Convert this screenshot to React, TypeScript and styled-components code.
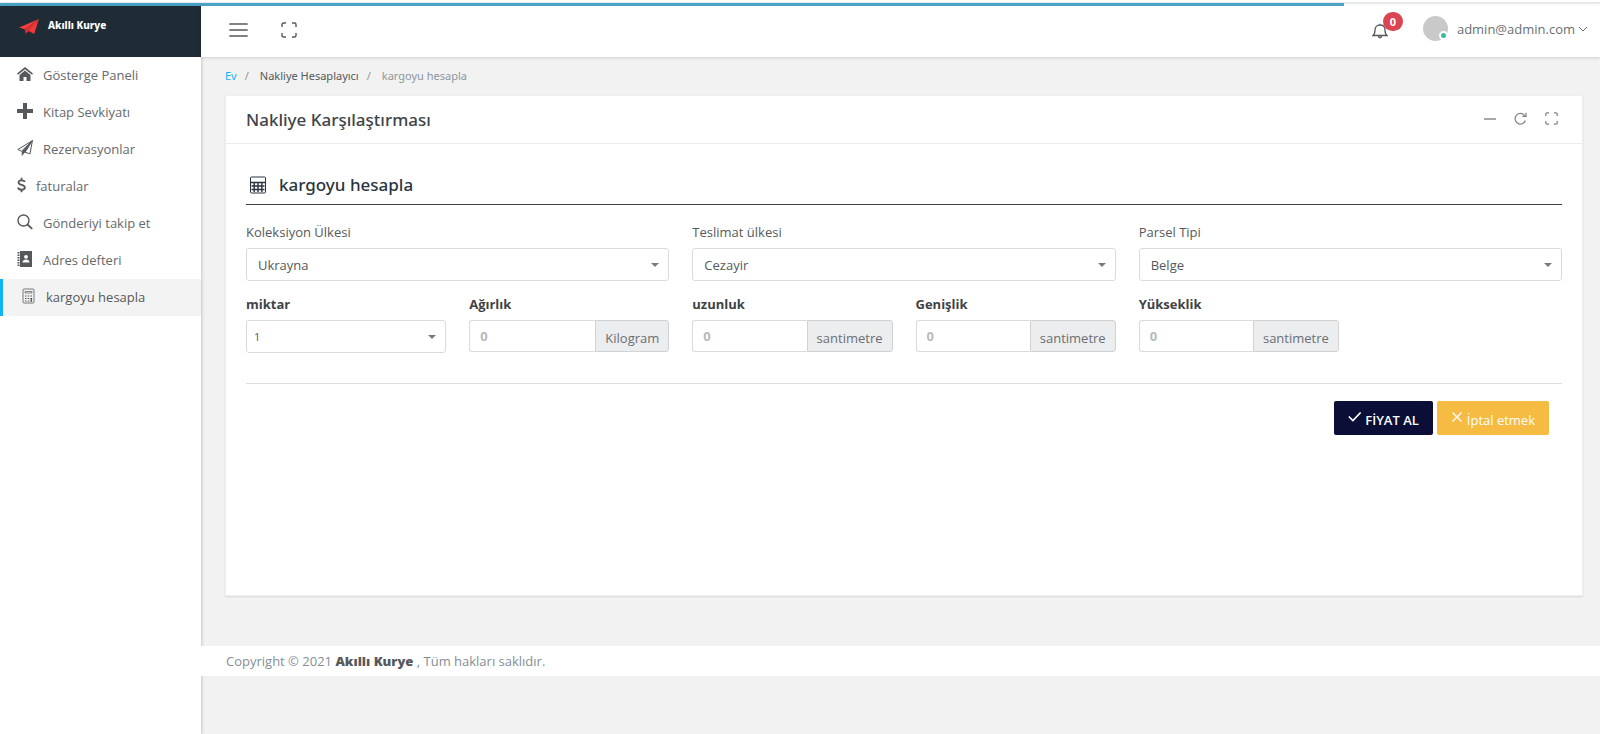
import React from "react";
import styled, { createGlobalStyle, css } from "styled-components";

const Global = createGlobalStyle`
  * { box-sizing: border-box; }
  body {
    margin: 0;
    background: #f2f2f2;
    color: #55595c;
    font: 13px/20px "Open Sans", "Noto Sans", sans-serif;
  }
  button, input, select { font: inherit; color: inherit; }
  a { color: inherit; text-decoration: none; }
`;

const headingFont = css`
  font-family: "Noto Sans", "Open Sans", sans-serif;
`;

const Page = styled.div`
  min-height: 100vh;
  display: flex;
  flex-direction: column;
`;

const Progress = styled.div`
  flex: none;
  height: 6px;
  padding-top: 3px;
  background: linear-gradient(#fff 2px, #e6e9eb 2px, #e6e9eb 4px, #fff 4px);
`;

const ProgressBar = styled.div`
  width: 84%;
  height: 3px;
  background: #4ba6ca;
`;

const Shell = styled.div`
  flex: 1;
  display: flex;
`;

const Sidebar = styled.aside`
  flex: none;
  width: 201px;
  background: #fff;
  box-shadow: 1px 0 3px rgba(0, 0, 0, 0.18);
`;

const Brand = styled.a`
  ${headingFont}
  height: 51px;
  padding: 9px 19px;
  display: flex;
  gap: 9px;
  background: #1f2b35;
  color: #fff;
  font-size: 10px;
  font-weight: 800;
  svg { margin-top: 4px; }
`;

const Nav = styled.nav`
  display: flex;
  flex-direction: column;
`;

const NavItem = styled.a<{ $active?: boolean }>`
  height: 37px;
  padding: 0 17px 1px;
  display: flex;
  align-items: center;
  gap: 10px;
  color: #66696c;
  svg { color: #55595c; margin-bottom: 2px; }
  ${(p) =>
    p.$active &&
    css`
      background: #f3f3f3;
      border-left: 3px solid #10b4f5;
      color: #55595c;
      padding-left: 19px;
      gap: 11px;
    `}
`;

const Main = styled.div`
  flex: 1;
  min-width: 0;
`;

const TopBar = styled.header`
  height: 51px;
  padding: 0 12px 4px 28px;
  display: flex;
  align-items: center;
  justify-content: space-between;
  background: #fff;
  box-shadow: 0 1px 3px rgba(0, 0, 0, 0.15);
`;

const BarGroup = styled.div<{ $gap: number }>`
  display: flex;
  align-items: center;
  gap: ${(p) => p.$gap}px;
`;

const IconButton = styled.button`
  display: flex;
  padding: 0;
  border: 0;
  background: none;
  color: inherit;
  position: relative;
  cursor: pointer;
`;

const Badge = styled.span`
  position: absolute;
  top: -11px;
  left: 11px;
  width: 20px;
  height: 19px;
  border-radius: 10px;
  background: #da4453;
  color: #fff;
  font-size: 11px;
  line-height: 19px;
  font-weight: 700;
  text-align: center;
`;

const Bell = styled(IconButton)`
  margin-top: 2px;
`;

const UserMenu = styled(IconButton)`
  padding-bottom: 2px;
  align-items: center;
  gap: 9px;
  color: #6b6f73;
`;

const UserName = styled.span`
  display: flex;
  align-items: center;
  gap: 3px;
`;

const Avatar = styled.span`
  position: relative;
  width: 25px;
  height: 25px;
  border-radius: 50%;
  background: #c9c9c9;
  &::after {
    content: "";
    position: absolute;
    right: 0;
    bottom: 1px;
    width: 9px;
    height: 9px;
    border: 2px solid #fff;
    border-radius: 50%;
    background: #37bc9b;
    box-sizing: border-box;
  }
`;

const Content = styled.main`
  padding: 9px 17px 50px 24px;
`;

const Crumbs = styled.nav`
  ${headingFont}
  display: flex;
  gap: 8px;
  font-size: 11px;
  margin-bottom: 9px;
  color: #8f969c;
`;

const Separator = styled.span`
  margin-right: 3px;
`;

const CrumbLink = styled.a<{ $accent?: boolean }>`
  color: ${(p) => (p.$accent ? "#10b4f5" : "#55595c")};
`;

const Card = styled.section`
  min-height: 501px;
  background: #fff;
  border: 1px solid #efefef;
  box-shadow: 0 1px 2px rgba(0, 0, 0, 0.1);
`;

const CardHeader = styled.header`
  height: 48px;
  padding: 0 24px 0 20px;
  display: flex;
  align-items: center;
  justify-content: space-between;
  border-bottom: 1px solid #ececec;
`;

const Title = styled.h1`
  ${headingFont}
  margin: 0;
  font-size: 17px;
  font-weight: 500;
  color: #404448;
`;

const Tools = styled(BarGroup)`
  padding-bottom: 2px;
  color: #7d8286;
`;

const Form = styled.form`
  padding: 24px 20px;
`;

const SectionTitle = styled.h2`
  ${headingFont}
  margin: 0 0 17px;
  padding: 4px 4px 7px;
  display: flex;
  align-items: center;
  gap: 13px;
  height: 37px;
  border-bottom: 1px solid #404346;
  color: #2b3540;
  font-size: 17px;
  font-weight: 500;
`;

const Fields = styled.div`
  display: grid;
  grid-template-columns: repeat(6, 1fr);
  gap: 13px 23px;
`;

const Field = styled.div<{ $span?: number }>`
  grid-column: span ${(p) => p.$span ?? 1};
  min-width: 0;
`;

const Label = styled.label<{ $bold?: boolean }>`
  display: block;
  margin-bottom: 6px;
  font-weight: ${(p) => (p.$bold ? 700 : 400)};
  color: ${(p) => (p.$bold ? "#404346" : "#55595c")};
`;

const SelectBox = styled.div`
  display: grid;
  align-items: center;
  &::after {
    content: "";
    grid-area: 1 / 1;
    justify-self: end;
    margin-right: 10px;
    border: 4px solid transparent;
    border-top-color: #7a7a7a;
    border-bottom: 0;
    pointer-events: none;
  }
`;

const Select = styled.select<{ $small?: boolean }>`
  grid-area: 1 / 1;
  width: 100%;
  height: 33px;
  padding: 0 ${(p) => (p.$small ? 7 : 11)}px;
  appearance: none;
  border: 1px solid #d9dbdd;
  border-radius: 3px;
  background: #fff;
  font-size: ${(p) => (p.$small ? 11 : 13)}px;
`;

const InputGroup = styled.div`
  display: flex;
  height: 32px;
`;

const Input = styled.input`
  flex: 1;
  min-width: 0;
  padding: 0 10px;
  border: 1px solid #d9dbdd;
  border-right: 0;
  border-radius: 3px 0 0 3px;
  background: #fff;
  &::placeholder { color: #b8babc; font-weight: 700; opacity: 1; }
`;

const Unit = styled.span`
  padding: 7px 9px 0;
  border: 1px solid #d0d2d4;
  border-radius: 0 3px 3px 0;
  background: #ecedef;
  color: #6b6f73;
`;

const Actions = styled.div`
  margin-top: 30px;
  padding: 17px 13px 0;
  display: flex;
  justify-content: flex-end;
  gap: 4px;
  border-top: 1px solid #dcdddf;
`;

const Button = styled.button<{ $color: string; $strong?: boolean }>`
  height: 34px;
  padding: 3px 14px 0;
  display: flex;
  align-items: center;
  gap: 4px;
  border: 0;
  border-radius: 2px;
  background: ${(p) => p.$color};
  color: #fff;
  font-weight: ${(p) => (p.$strong ? 600 : 400)};
  cursor: pointer;
  svg { margin-bottom: 6px; }
`;

const Footer = styled.footer`
  padding: 5px 25px 5px;
  background: #fff;
  color: #868e96;
  strong { color: #55595c; font-weight: 800; }
`;

type IconProps = { w?: number; h?: number; box?: string; sw?: number; fill?: boolean; children: React.ReactNode };
const Icon = ({ w = 16, h = w, box = "0 0 16 16", sw = 1, fill, children }: IconProps) => (
  <svg width={w} height={h} viewBox={box} fill={fill ? "currentColor" : "none"} stroke={fill ? "none" : "currentColor"} strokeWidth={sw} aria-hidden="true">
    {children}
  </svg>
);

const corners = "M1 5V2.5Q1 1 2.500 1H5M11 1h2.500Q15 1 15 2.500V5M15 11v2.500Q15 15 13.500 15H11M5 15H2.500Q1 15 1 13.500V11";

const Logo = () => (
  <svg width="20" height="16" viewBox="0 0 21 17" aria-hidden="true">
    <path d="M21 0 0 9l6 2z" fill="#f4413f" />
    <path d="M21 0 6 11l1 5 3-3z" fill="#b3262b" />
    <path d="M21 0 9 12l7 4z" fill="#ee3a3a" />
    <path d="M21 0 6 11l1 4 3-2z" fill="#d93034" />
  </svg>
);

const HomeIcon = () => (
  <Icon fill>
    <path d="M8 1 0 7.500l1 1.300 7-5.600 7 5.600 1-1.300z" />
    <path d="M8 4.600 2.500 9v6H6.500v-4h3v4h4V9z" />
  </Icon>
);
const PlusIcon = () => <Icon fill><path d="M6 0h4v6h6v4h-6v6H6v-6H0V6h6z" /></Icon>;
const PlaneIcon = () => (
  <Icon>
    <path d="M15.400.6.800 9.500l3.700 1.700L15.400.6 13 13.800l-5-1.500z" strokeLinejoin="round" />
    <path d="M15.400.6 5 11.400V15.500l2.800-3.300z" fill="currentColor" strokeWidth="0.500" />
  </Icon>
);
const DollarIcon = () => (
  <Icon w={9} h={16} box="0 0 10 16" sw={2}>
    <path d="M8.700 4.800C8.300 3.400 7 2.800 5 2.800 3 2.800 1.700 3.600 1.700 5.200 1.700 8.600 8.700 7 8.700 10.700c0 1.700-1.500 2.500-3.700 2.500-2.200 0-3.500-.8-3.900-2.400M5 0v2.800M5 13.200V16" />
  </Icon>
);
const SearchIcon = () => <Icon sw={1.4}><circle cx="6.500" cy="6.500" r="5.500" /><path d="m10.500 10.500 4.700 4.300" strokeWidth="1.800" /></Icon>;
const BookIcon = () => (
  <Icon>
    <path d="M1.500 1v14" strokeWidth="2" strokeDasharray="1.500 1" />
    <path d="M3 0h12v16H3z" fill="currentColor" stroke="none" />
    <circle cx="9" cy="5.800" r="1.900" fill="#fff" stroke="none" />
    <path d="M5.500 11.500c0-4 7-4 7 0z" fill="#fff" stroke="none" />
  </Icon>
);
const CalcIcon = () => (
  <Icon w={13} h={16} box="0 0 13 16">
    <rect x="1" y="1" width="11" height="14" rx="1" strokeWidth="0.800" />
    <path d="M3 3.500h7v1.500H3z" strokeWidth="0.700" />
    <path d="M3 8h7M3 10.500h7M3 13h7" strokeWidth="1.200" strokeDasharray="1.600 1.100" />
    <path d="M9.400 10v3.500" strokeWidth="1.400" />
  </Icon>
);
const TableCalcIcon = () => (
  <Icon w={16} h={18} box="0 0 16 18">
    <rect x="0.500" y="1" width="15" height="16" rx="1" />
    <path d="M0.500 6.500h15M1.500 10h13M1.500 13.500h13M4.200 6.500V16M8 6.500V16M11.800 6.500V16" strokeWidth="1.400" />
  </Icon>
);

const nav = [
  { label: "Gösterge Paneli", icon: <HomeIcon /> },
  { label: "Kitap Sevkiyatı", icon: <PlusIcon /> },
  { label: "Rezervasyonlar", icon: <PlaneIcon /> },
  { label: "faturalar", icon: <DollarIcon /> },
  { label: "Gönderiyi takip et", icon: <SearchIcon /> },
  { label: "Adres defteri", icon: <BookIcon /> },
  { label: "kargoyu hesapla", icon: <CalcIcon />, active: true },
];

const selects = [
  { id: "from", label: "Koleksiyon Ülkesi", value: "Ukrayna" },
  { id: "to", label: "Teslimat ülkesi", value: "Cezayir" },
  { id: "type", label: "Parsel Tipi", value: "Belge" },
];

const measures = [
  { id: "weight", label: "Ağırlık", unit: "Kilogram" },
  { id: "length", label: "uzunluk", unit: "santimetre" },
  { id: "width", label: "Genişlik", unit: "santimetre" },
  { id: "height", label: "Yükseklik", unit: "santimetre" },
];

export default function App() {
  return (
    <Page>
      <Global />
      <Progress><ProgressBar /></Progress>
      <Shell>
        <Sidebar>
          <Brand href="#"><Logo />Akıllı Kurye</Brand>
          <Nav>
            {nav.map((n) => (
              <NavItem key={n.label} href="#" $active={n.active}>
                {n.icon}{n.label}
              </NavItem>
            ))}
          </Nav>
        </Sidebar>
        <Main>
          <TopBar>
            <BarGroup $gap={33}>
              <IconButton type="button">
                <Icon w={19} h={14} box="0 0 19 14" sw={1.7}><path d="M1 1h17M1 7h17M1 13h17" strokeLinecap="round" /></Icon>
              </IconButton>
              <IconButton type="button"><Icon sw={1.4}><path d={corners} /></Icon></IconButton>
            </BarGroup>
            <BarGroup $gap={35}>
              <Bell type="button">
                <Icon>
                  <path d="M1 12.500C3 11 3 9.500 3 7c0-3 2-5 5-5s5 2 5 5c0 2.500 0 4 2 5.500zM6.500 13c0 2.300 3 2.300 3 0M8 2V.8" strokeWidth="1.300" />
                </Icon>
                <Badge>0</Badge>
              </Bell>
              <UserMenu type="button">
                <Avatar />
                <UserName>
                  admin@admin.com
                  <Icon w={10} h={6} box="0 0 10 6"><path d="m1 1 4 4 4-4" /></Icon>
                </UserName>
              </UserMenu>
            </BarGroup>
          </TopBar>
          <Content>
            <Crumbs>
              <CrumbLink href="#" $accent>Ev</CrumbLink><Separator>/</Separator>
              <CrumbLink href="#">Nakliye Hesaplayıcı</CrumbLink><Separator>/</Separator>
              <span>kargoyu hesapla</span>
            </Crumbs>
            <Card>
              <CardHeader>
                <Title>Nakliye Karşılaştırması</Title>
                <Tools $gap={18}>
                  <IconButton type="button"><Icon w={12} box="0 0 12 12"><path d="M0 6h12" strokeWidth="1.400" /></Icon></IconButton>
                  <IconButton type="button">
                    <Icon w={13} sw={1.5}><path d="M14 10.500A6.500 6.500 0 1 1 13.200 4.500M14.800 1v4.500h-4.500" /></Icon>
                  </IconButton>
                  <IconButton type="button"><Icon w={13} sw={1.5}><path d={corners} /></Icon></IconButton>
                </Tools>
              </CardHeader>
              <Form onSubmit={(e) => e.preventDefault()}>
                <SectionTitle><TableCalcIcon />kargoyu hesapla</SectionTitle>
                <Fields>
                  {selects.map((s) => (
                    <Field key={s.id} $span={2}>
                      <Label htmlFor={s.id}>{s.label}</Label>
                      <SelectBox>
                        <Select id={s.id}><option>{s.value}</option></Select>
                      </SelectBox>
                    </Field>
                  ))}
                  <Field>
                    <Label htmlFor="qty" $bold>miktar</Label>
                    <SelectBox><Select id="qty" $small><option>1</option></Select></SelectBox>
                  </Field>
                  {measures.map((m) => (
                    <Field key={m.id}>
                      <Label htmlFor={m.id} $bold>{m.label}</Label>
                      <InputGroup>
                        <Input id={m.id} placeholder="0" />
                        <Unit>{m.unit}</Unit>
                      </InputGroup>
                    </Field>
                  ))}
                </Fields>
                <Actions>
                  <Button type="submit" $color="#0b0f38" $strong>
                    <Icon w={13} sw={2}><path d="m1 8 5 5L15.500 3" /></Icon>FİYAT AL
                  </Button>
                  <Button type="button" $color="#f6bb42">
                    <Icon w={12} sw={1.8}><path d="m2 2 12 12M14 2 2 14" /></Icon>İptal etmek
                  </Button>
                </Actions>
              </Form>
            </Card>
          </Content>
          <Footer>Copyright © 2021 <strong>Akıllı Kurye</strong> , Tüm hakları saklıdır.</Footer>
        </Main>
      </Shell>
    </Page>
  );
}
